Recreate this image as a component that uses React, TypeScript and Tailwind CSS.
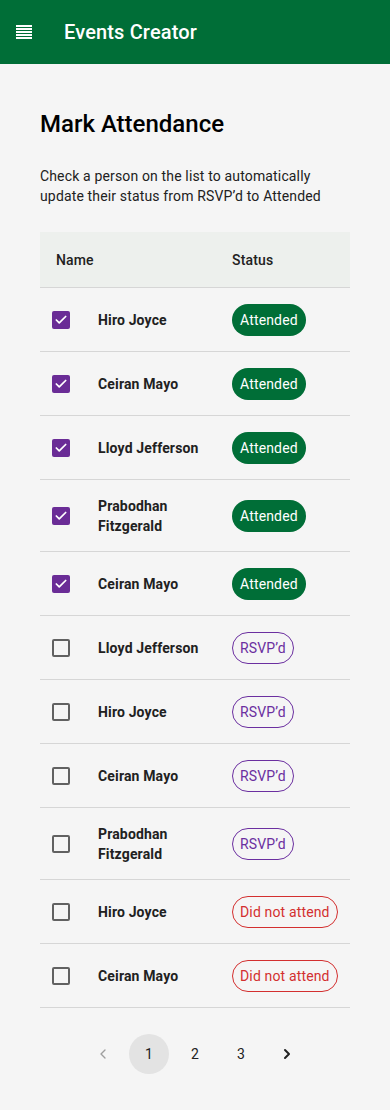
import { Check, ChevronLeft, ChevronRight } from "lucide-react";

type Status = "attended" | "rsvp" | "missed";

interface Person {
  name: string;
  status: Status;
}

const people: Person[] = [
  { name: "Hiro Joyce", status: "attended" },
  { name: "Ceiran Mayo", status: "attended" },
  { name: "Lloyd Jefferson", status: "attended" },
  { name: "Prabodhan Fitzgerald", status: "attended" },
  { name: "Ceiran Mayo", status: "attended" },
  { name: "Lloyd Jefferson", status: "rsvp" },
  { name: "Hiro Joyce", status: "rsvp" },
  { name: "Ceiran Mayo", status: "rsvp" },
  { name: "Prabodhan Fitzgerald", status: "rsvp" },
  { name: "Hiro Joyce", status: "missed" },
  { name: "Ceiran Mayo", status: "missed" },
];

function MenuIcon() {
  return (
    <svg width="16" height="14" viewBox="0 0 16 14" fill="white" aria-hidden>
      <rect x="0" y="0" width="16" height="2" />
      <rect x="0" y="3" width="16" height="2" />
      <rect x="0" y="6" width="16" height="2" />
      <rect x="0" y="9" width="16" height="2" />
      <rect x="0" y="12" width="16" height="2" />
    </svg>
  );
}

function StatusChip({ status }: { status: Status }) {
  if (status === "attended") {
    return (
      <span className="inline-flex h-8 items-center rounded-full bg-[#006e37] px-2 text-sm text-white">Attended</span>
    );
  }
  if (status === "rsvp") {
    return (
      <span className="inline-flex h-8 items-center rounded-full border border-[#6b2fa0] px-[7px] text-sm text-[#6b2fa0]">
        RSVP’d
      </span>
    );
  }
  return (
    <span className="inline-flex h-8 items-center rounded-full border border-[#d32f2f] px-[7px] text-sm text-[#d32f2f]">
      Did not attend
    </span>
  );
}

function Checkbox({ checked }: { checked: boolean }) {
  return checked ? (
    <span className="grid h-[18px] w-[18px] place-items-center rounded-[2px] bg-[#6a2c96] text-white">
      <Check className="h-[14px] w-[14px]" strokeWidth={3} />
    </span>
  ) : (
    <span className="block h-[18px] w-[18px] rounded-[2px] border-2 border-[#616161]" />
  );
}

export default function App() {
  return (
    <div className="min-h-[1110px] bg-[#f5f5f5] font-['Roboto',sans-serif] tracking-[0.15px] text-[#1f1f1f]">
      <header className="flex h-16 items-center bg-[#006e37] px-4 text-white">
        <MenuIcon />
        <h1 className="ml-8 text-xl font-medium">Events Creator</h1>
      </header>

      <main className="px-10 pt-11 pb-9">
        <h2 className="text-2xl leading-8 font-medium tracking-normal text-black">Mark Attendance</h2>
        <p className="mt-[26px] text-sm leading-5 text-[#212121]">
          Check a person on the list to automatically update their status from RSVP’d to Attended
        </p>

        <div className="mt-[26px]">
          <div className="grid h-14 grid-cols-[192px_1fr] items-center border-b border-[#d6d6d6] bg-[#edf0ed] text-sm font-medium text-[#212121]">
            <span className="pl-4">Name</span>
            <span>Status</span>
          </div>

          {people.map((p, i) => (
            <div
              key={i}
              className="grid min-h-16 grid-cols-[58px_134px_1fr] items-center border-b border-[#d6d6d6] pt-4 pb-[15px]"
            >
              <span className="pl-3">
                <Checkbox checked={p.status === "attended"} />
              </span>
              <span className="pr-4 text-sm leading-5 font-bold text-[#212121]">{p.name}</span>
              <span>
                <StatusChip status={p.status} />
              </span>
            </div>
          ))}
        </div>

        <nav className="mt-[26px] flex items-center justify-center gap-1.5 text-sm text-[#212121]">
          <button className="grid h-10 w-10 place-items-center text-[#9e9e9e]">
            <ChevronLeft className="h-4 w-4" />
          </button>
          <button className="grid h-10 w-10 place-items-center rounded-full bg-[#e3e3e3]">1</button>
          <button className="grid h-10 w-10 place-items-center">2</button>
          <button className="grid h-10 w-10 place-items-center">3</button>
          <button className="grid h-10 w-10 place-items-center text-[#212121]">
            <ChevronRight className="h-4 w-4" strokeWidth={3} />
          </button>
        </nav>
      </main>
    </div>
  );
}
